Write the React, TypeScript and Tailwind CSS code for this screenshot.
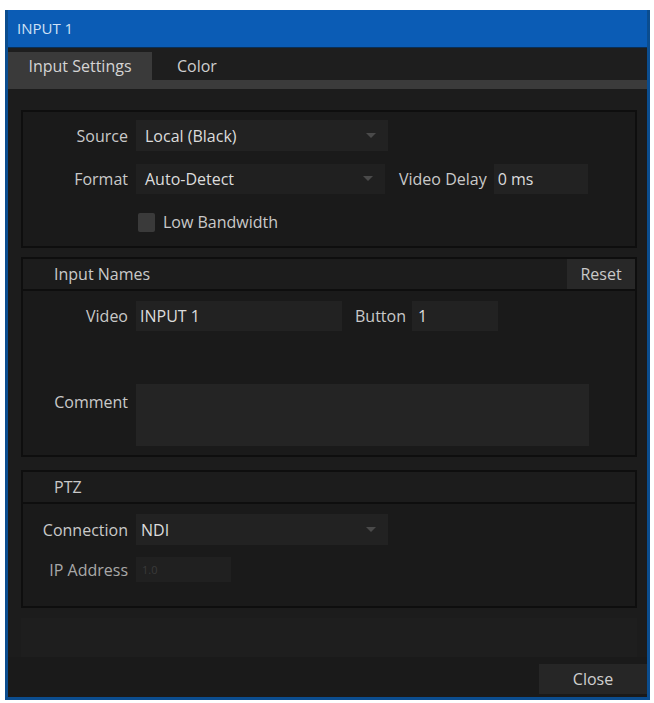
import React from "react";

const font = { fontFamily: '"Open Sans", "Noto Sans", sans-serif' };

function Arrow() {
  return (
    <svg width="10" height="6" viewBox="0 0 10 6" className="shrink-0">
      <path d="M0 0 L10 0 L5 5 Z" fill="#4a4a4a" />
    </svg>
  );
}

function Label({ children, dim }: { children: React.ReactNode; dim?: boolean }) {
  return (
    <div className={`w-[105px] shrink-0 text-right ${dim ? "text-[#a8a8a8]" : "text-[#c9c9c9]"}`}>{children}</div>
  );
}

export default function App() {
  return (
    <div className="w-[654px] h-[703px] bg-white pt-[10px] pl-[5px] text-[16px] leading-none" style={font}>
      <div className="w-[645px] h-[690px] border-x-[3px] border-b-[3px] border-[#0b4d8f] border-t-0 flex flex-col bg-[#1c1c1c]">
        {/* title bar */}
        <div className="h-[37px] bg-[#0b5cb5] flex items-center pl-[9px] text-[15px] text-[#cfe1f6] shrink-0">INPUT 1</div>
        {/* tabs */}
        <div className="h-[33px] bg-[#1e1e1e] pt-[5px] flex items-end shrink-0 border-t border-[#0a2f55]">
          <div className="w-[144px] h-[28px] bg-[#3a3a3a] flex items-center justify-center text-[#d4d4d4]">Input Settings</div>
          <div className="ml-[25px] h-[28px] flex items-center text-[#cfcfcf]">Color</div>
        </div>
        <div className="h-[9px] bg-[#3b3b3b] shrink-0" />
        {/* content */}
        <div className="flex-1 flex flex-col pl-[13px] pr-[10px] pt-[21px]">
          {/* panel 1 */}
          <div className="w-[616px] h-[138px] border-2 border-[#0e0e0e] bg-[#1a1a1a] pt-[8px]">
            <div className="flex items-center h-[31px]">
              <Label>Source</Label>
              <div className="ml-[8px] w-[252px] h-[31px] bg-[#222222] flex items-center justify-between pl-[9px] pr-[12px] text-[#dcdcdc]">
                <span>Local (Black)</span>
                <Arrow />
              </div>
            </div>
            <div className="flex items-center h-[30px] mt-[13px]">
              <Label>Format</Label>
              <div className="ml-[8px] w-[249px] h-[30px] bg-[#202020] flex items-center justify-between pl-[9px] pr-[12px] text-[#dcdcdc]">
                <span>Auto-Detect</span>
                <Arrow />
              </div>
              <div className="ml-[14px] text-[#c9c9c9]">Video Delay</div>
              <div className="ml-[7px] w-[94px] h-[30px] bg-[#222222] flex items-center pl-[4px] text-[#dcdcdc]">0 ms</div>
            </div>
            <div className="flex items-center h-[20px] mt-[18px] pl-[115px]">
              <div className="w-[17px] h-[19px] bg-[#3a3a3a] rounded-[2px]" />
              <div className="ml-[8px] text-[#c9c9c9]">Low Bandwidth</div>
            </div>
          </div>

          {/* panel 2 */}
          <div className="w-[616px] h-[200px] mt-[9px] border-2 border-[#0e0e0e] bg-[#1a1a1a] flex flex-col">
            <div className="h-[32px] flex items-center justify-between border-b-2 border-[#0e0e0e] bg-[#1c1c1c] shrink-0">
              <div className="pl-[31px] text-[#c9c9c9]">Input Names</div>
              <div className="w-[68px] h-full bg-[#282828] flex items-center justify-center text-[#c9c9c9]">Reset</div>
            </div>
            <div className="flex items-center h-[30px] mt-[10px]">
              <Label>Video</Label>
              <div className="ml-[8px] w-[206px] h-[30px] bg-[#222222] flex items-center pl-[4px] text-[#dcdcdc]">INPUT 1</div>
              <div className="ml-[13px] text-[#c9c9c9]">Button</div>
              <div className="ml-[6px] w-[86px] h-[30px] bg-[#222222] flex items-center pl-[6px] text-[#dcdcdc]">1</div>
            </div>
            <div className="flex items-start mt-[53px]">
              <div className="mt-[10px]">
                <Label>Comment</Label>
              </div>
              <div className="ml-[8px] w-[453px] h-[62px] bg-[#242424]" />
            </div>
          </div>

          {/* panel 3 */}
          <div className="w-[616px] h-[138px] mt-[13px] border-2 border-[#0e0e0e] bg-[#1a1a1a] flex flex-col">
            <div className="h-[32px] flex items-center border-b-2 border-[#0e0e0e] bg-[#1c1c1c] shrink-0">
              <div className="pl-[31px] text-[#c9c9c9]">PTZ</div>
            </div>
            <div className="flex items-center h-[31px] mt-[10px]">
              <Label>Connection</Label>
              <div className="ml-[8px] w-[252px] h-[31px] bg-[#222222] flex items-center justify-between pl-[5px] pr-[12px] text-[#dcdcdc]">
                <span>NDI</span>
                <Arrow />
              </div>
            </div>
            <div className="flex items-center h-[25px] mt-[12px]">
              <Label dim>IP Address</Label>
              <div className="ml-[8px] w-[95px] h-[25px] bg-[#202020] flex items-center pl-[6px] text-[11px] text-[#3a3a3a]">1.0</div>
            </div>
          </div>

          {/* footer */}
          <div className="flex-1 flex flex-col">
            <div className="h-[10px]" />
            <div className="flex-1 bg-[#1e1e1e]" />
          </div>
        </div>
        <div className="h-[40px] bg-[#1a1a1a] shrink-0 flex items-start justify-end">
          <div className="mt-[7px] w-[108px] h-[30px] bg-[#262626] flex items-center justify-center text-[#cfcfcf]">Close</div>
        </div>
      </div>
    </div>
  );
}
